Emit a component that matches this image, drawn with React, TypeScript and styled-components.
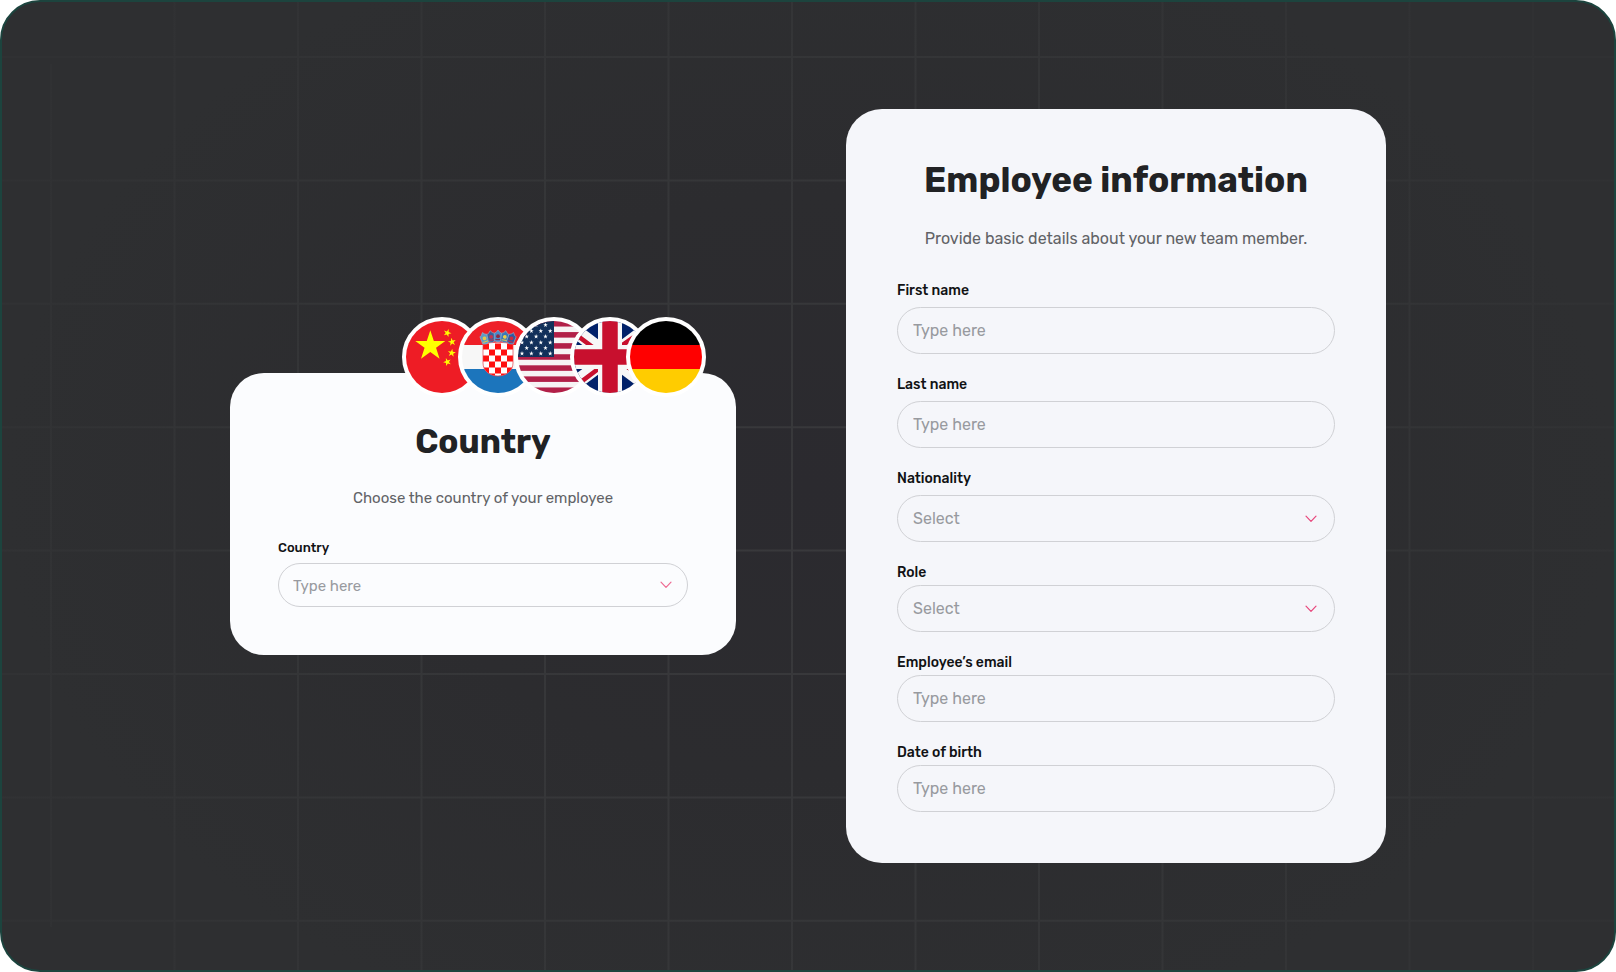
import React, { useId } from "react";
import styled, { createGlobalStyle } from "styled-components";

const GlobalStyle = createGlobalStyle`
  *, *::before, *::after { box-sizing: border-box; }
  body {
    margin: 0;
    background: #ffffff;
    font-family: Rubik, Roboto, "Liberation Sans", sans-serif;
    -webkit-font-smoothing: antialiased;
  }
`;

const Stage = styled.main`
  position: relative;
  display: flex;
  flex-wrap: wrap;
  align-items: center;
  justify-content: center;
  gap: 48px 110px;
  min-height: 100vh;
  padding: 48px 24px;
  overflow: hidden;
  border: 2px solid #1c443e;
  border-radius: 40px;
  background: radial-gradient(ellipse 50% 60% at 50% 50%, #2b2a2f 0%, #2c2c2f 50%, #2e2f31 100%);
`;

const GridArt = styled.svg`
  position: absolute;
  inset: 0;
  width: 100%;
  height: 100%;
`;

const CountryColumn = styled.section`
  position: relative;
  display: flex;
  flex-direction: column;
  flex: 0 1 506px;
`;

const FlagRow = styled.div`
  position: relative;
  z-index: 1;
  display: flex;
  align-self: flex-end;
  margin: 0 30px -24px 0;
`;

const FlagBadge = styled.svg`
  width: 80px;
  height: 80px;
  border: 4px solid #ffffff;
  border-radius: 50%;
  background: #ffffff;

  & + & { margin-left: -24px; }
`;

const Card = styled.form<{ $size: "small" | "large" }>`
  position: relative;
  flex: ${(p) => (p.$size === "large" ? "0 1 540px" : "0 0 auto")};
  padding: ${(p) => (p.$size === "large" ? "49px 51px 51px" : "49px 48px 48px")};
  border-radius: ${(p) => (p.$size === "large" ? 36 : 34)}px;
  background: ${(p) => (p.$size === "large" ? "#f5f6fa" : "#fbfcfe")};
`;

const Title = styled.h2<{ $size: "small" | "large" }>`
  margin: 0 0 ${(p) => (p.$size === "large" ? 27 : 26)}px;
  color: #212224;
  font-size: ${(p) => (p.$size === "large" ? 35 : 33)}px;
  font-weight: 700;
  line-height: ${(p) => (p.$size === "large" ? 44 : 40)}px;
  text-align: center;
`;

const Subtitle = styled.p<{ $size: "small" | "large" }>`
  margin: 0 0 ${(p) => (p.$size === "large" ? 34 : 32)}px;
  color: #616266;
  font-size: ${(p) => (p.$size === "large" ? 16 : 15)}px;
  font-weight: 400;
  line-height: 20px;
  text-align: center;
`;

const Fields = styled.div`
  display: flex;
  flex-direction: column;
  gap: 23px;
`;

const Field = styled.div<{ $gap: number }>`
  display: flex;
  flex-direction: column;
  gap: ${(p) => p.$gap}px;
`;

const Label = styled.label<{ $size: "small" | "large" }>`
  color: #111214;
  font-size: ${(p) => (p.$size === "large" ? 14 : 13)}px;
  font-weight: 500;
  line-height: 16px;
`;

const Control = styled.div`
  position: relative;
  display: flex;
`;

const TextInput = styled.input`
  width: 100%;
  height: 47px;
  padding: 0 15px;
  border: 1px solid #d0d1d5;
  border-radius: 24px;
  background: transparent;
  color: #202124;
  font: inherit;
  font-size: 16px;

  &::placeholder { color: #989a9f; opacity: 1; }
`;

const Picker = styled.select<{ $size: "small" | "large" }>`
  appearance: none;
  width: 100%;
  height: ${(p) => (p.$size === "large" ? 47 : 44)}px;
  padding: ${(p) => (p.$size === "large" ? "0 44px 0 15px" : "2px 44px 0 14px")};
  border: 1px solid #d0d1d5;
  border-radius: 24px;
  background: transparent;
  color: #989a9f;
  font: inherit;
  font-size: ${(p) => (p.$size === "large" ? 16 : 15)}px;
`;

const Chevron = styled.svg<{ $soft?: boolean }>`
  position: absolute;
  top: 50%;
  right: ${(p) => (p.$soft ? 16 : 18)}px;
  width: 12px;
  height: 8px;
  margin-top: -4px;
  pointer-events: none;
  fill: none;
  stroke: ${(p) => (p.$soft ? "#ee6a92" : "#e8457b")};
  stroke-width: 1.2;
  stroke-linecap: round;
  stroke-linejoin: round;
`;

function starPoints(cx: number, cy: number, r: number, turn = 0) {
  return Array.from({ length: 10 }, (_, i) => {
    const radius = i % 2 ? r * 0.382 : r;
    const a = ((turn + i * 36 - 90) * Math.PI) / 180;
    return `${(cx + radius * Math.cos(a)).toFixed(2)},${(cy + radius * Math.sin(a)).toFixed(2)}`;
  }).join(" ");
}

const ChinaFlag = () => (
  <FlagBadge viewBox="0 0 72 72" role="img" aria-label="China">
    <rect width="72" height="72" fill="#ee1c25" />
    <g fill="#ffff00">
      <polygon points={starPoints(24.3, 25, 15.8)} />
      <polygon points={starPoints(41.3, 12, 4.2, 20)} />
      <polygon points={starPoints(46, 21, 4.2, -10)} />
      <polygon points={starPoints(45.7, 32, 4.2, 8)} />
      <polygon points={starPoints(41.3, 41, 4.2, -20)} />
    </g>
  </FlagBadge>
);

const CROWN = [
  { x: 22.5, y: 17.4, turn: -20, fill: "#5a9cc8", mark: "#e8c84a" },
  { x: 29.2, y: 15.8, turn: -10, fill: "#3a5f9a", mark: "#c43550" },
  { x: 36, y: 15.2, turn: 0, fill: "#4a8acb", mark: "#8b2b45" },
  { x: 42.8, y: 15.8, turn: 10, fill: "#3a78b8", mark: "#e8d04a" },
  { x: 49.5, y: 17.4, turn: 20, fill: "#2f5aa3", mark: "#c92e3f" },
];

const CroatiaFlag = () => {
  const clip = useId();
  const shield = "M21 23 Q36 19.5 51 23 V42 C51 50 44 55 36 55 C28 55 21 50 21 42 Z";
  return (
    <FlagBadge viewBox="0 0 72 72" role="img" aria-label="Croatia">
      <clipPath id={clip}><path d={shield} /></clipPath>
      <rect width="72" height="24" fill="#ee1f28" />
      <rect y="24" width="72" height="24" fill="#f7f7f7" />
      <rect y="48" width="72" height="24" fill="#1c75bc" />
      <path d={shield} fill="#ffffff" />
      <g clipPath={`url(#${clip})`} fill="#ff1010">
        {Array.from({ length: 30 }, (_, i) => ({ c: i % 5, r: Math.floor(i / 5) }))
          .filter(({ c, r }) => (c + r) % 2 === 0)
          .map(({ c, r }) => (
            <rect key={`${c}-${r}`} x={21 + c * 6} y={22.5 + r * 6} width="6" height="6" />
          ))}
      </g>
      <path d={shield} fill="none" stroke="#e8404a" strokeWidth="0.7" />
      {CROWN.map((s) => (
        <g key={s.x} transform={`translate(${s.x} ${s.y}) rotate(${s.turn})`}>
          <path d="M-3.8 -3 L-1.8 -4 L0 -6.2 L1.8 -4 L3.8 -3 L3.6 4.5 Q0 7 -3.6 4.5 Z" fill={s.fill} stroke="#9fb4c4" strokeWidth="0.6" />
          <circle r="1.9" fill={s.mark} />
          <path d="M-2.6 3.4 H2.6" stroke={s.mark} strokeWidth="1" />
        </g>
      ))}
    </FlagBadge>
  );
};

const UsaFlag = () => (
  <FlagBadge viewBox="0 0 72 72" role="img" aria-label="United States">
    <rect width="72" height="72" fill="#f7f3f4" />
    {[0, 1, 2, 3, 4, 5, 6].map((i) => (
      <rect key={i} y={(i * 144) / 13} width="72" height={72 / 13} fill="#b22048" />
    ))}
    <rect width="36" height="36" fill="#12305a" />
    <g fill="#ffffff">
      {[4, 10, 15.5, 21.5, 27, 32.5].map((y, r) =>
        (r % 2 ? [4, 13.4, 22.8, 32.2] : [8.7, 18.1, 27.5]).map((x) => (
          <polygon key={`${x}-${y}`} points={starPoints(x, y, 2.4)} />
        )),
      )}
    </g>
  </FlagBadge>
);

const UkFlag = () => (
  <FlagBadge viewBox="0 0 72 72" role="img" aria-label="United Kingdom">
    <rect width="72" height="72" fill="#012169" />
    <path d="M-12 0 L84 72 M84 0 L-12 72" stroke="#f7f7f7" strokeWidth="14" />
    <path
      d="M34.5 38 L-13.5 2 M37.5 34 L85.5 70 M34.5 34 L85.5 -2 M37.5 38 L-10.5 74"
      stroke="#c8102e"
      strokeWidth="4.6"
    />
    <path d="M36 0 V72 M0 36 H72" stroke="#f7f7f7" strokeWidth="24" />
    <path d="M36 0 V72 M0 36 H72" stroke="#c8102e" strokeWidth="15.5" />
  </FlagBadge>
);

const GermanyFlag = () => (
  <FlagBadge viewBox="0 0 72 72" role="img" aria-label="Germany">
    <rect width="72" height="24" fill="#000000" />
    <rect y="24" width="72" height="24" fill="#ff0000" />
    <rect y="48" width="72" height="24" fill="#ffcc00" />
  </FlagBadge>
);

const Down = ({ soft }: { soft?: boolean }) => (
  <Chevron $soft={soft} viewBox="0 0 12 8" aria-hidden="true">
    <path d="M1 1.2 L6 6.4 L11 1.2" />
  </Chevron>
);

const COLUMNS = Array.from({ length: 13 }, (_, i) => 49 + i * 123.5);
const ROWS = Array.from({ length: 8 }, (_, i) => 55 + i * 123.4);

const BackgroundGrid = () => (
  <GridArt viewBox="0 0 1612 968" preserveAspectRatio="xMidYMid slice" aria-hidden="true">
    <defs>
      <radialGradient id="grid-fade" gradientUnits="userSpaceOnUse" cx="806" cy="560" r="900">
        <stop offset="0" stopColor="#39393c" />
        <stop offset="0.5" stopColor="#353638" />
        <stop offset="1" stopColor="#303133" />
      </radialGradient>
    </defs>
    <g stroke="url(#grid-fade)" strokeWidth="2" fill="none">
      {COLUMNS.map((x, i) => (
        <path key={x} d={`M${x} ${i === 0 ? 62 : 0} V${i === 0 ? 925 : 968}`} />
      ))}
      {ROWS.map((y) => (
        <path key={y} d={`M0 ${y} H1612`} />
      ))}
    </g>
  </GridArt>
);

const EMPLOYEE_FIELDS = [
  { id: "first-name", label: "First name", kind: "text", gap: 8 },
  { id: "last-name", label: "Last name", kind: "text", gap: 8 },
  { id: "nationality", label: "Nationality", kind: "select", gap: 8 },
  { id: "role", label: "Role", kind: "select", gap: 4 },
  { id: "email", label: "Employee’s email", kind: "email", gap: 4 },
  { id: "birth", label: "Date of birth", kind: "text", gap: 4 },
];

export default function App() {
  return (
    <>
      <GlobalStyle />
      <Stage>
        <BackgroundGrid />
        <CountryColumn>
          <FlagRow>
            <ChinaFlag />
            <CroatiaFlag />
            <UsaFlag />
            <UkFlag />
            <GermanyFlag />
          </FlagRow>
          <Card $size="small">
            <Title $size="small">Country</Title>
            <Subtitle $size="small">Choose the country of your employee</Subtitle>
            <Field $gap={7}>
              <Label $size="small" htmlFor="country">Country</Label>
              <Control>
                <Picker $size="small" id="country" defaultValue="">
                  <option value="">Type here</option>
                </Picker>
                <Down soft />
              </Control>
            </Field>
          </Card>
        </CountryColumn>

        <Card $size="large">
          <Title $size="large">Employee information</Title>
          <Subtitle $size="large">Provide basic details about your new team member.</Subtitle>
          <Fields>
            {EMPLOYEE_FIELDS.map((f) => (
              <Field key={f.id} $gap={f.gap}>
                <Label $size="large" htmlFor={f.id}>{f.label}</Label>
                <Control>
                  {f.kind === "select" ? (
                    <>
                      <Picker $size="large" id={f.id} defaultValue="">
                        <option value="">Select</option>
                      </Picker>
                      <Down />
                    </>
                  ) : (
                    <TextInput id={f.id} type={f.kind} placeholder="Type here" />
                  )}
                </Control>
              </Field>
            ))}
          </Fields>
        </Card>
      </Stage>
    </>
  );
}
